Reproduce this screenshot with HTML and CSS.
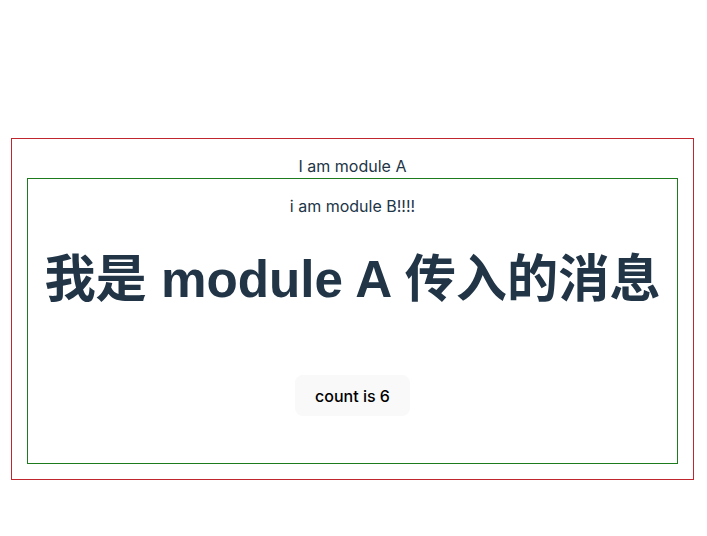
FILE: index.html
```html
<!DOCTYPE html>
<html lang="zh">
<head>
<meta charset="utf-8">
<title>module A</title>
<link rel="stylesheet" href="styles.css">
</head>
<body>
<div class="page">
  <div class="module-a">
    <div class="line">I am module A</div>
    <div class="module-b">
      <div class="line">i am module B!!!!</div>
      <h1 class="title">我是 module A 传入的消息</h1>
      <div class="card">
        <button class="count-btn" type="button">count is 6</button>
      </div>
    </div>
  </div>
</div>
</body>
</html>
```

FILE: styles.css
```css
html, body {
  margin: 0;
  background: #ffffff;
}
body {
  font-family: Inter, "Noto Sans CJK SC", sans-serif;
  font-size: 16px;
  line-height: 1.5;
  font-weight: 400;
  color: #213547;
}
.page {
  padding: 138px 13px 0 11px;
}
.module-a {
  border: 1px solid #c0262d;
  padding: 15px;
  text-align: center;
}
.module-b {
  border: 1px solid #1d7a1d;
  padding: 15px;
}
.line {
  line-height: 24px;
}
.title {
  font-size: 51.2px;
  line-height: 1.1;
  font-weight: 700;
  margin: 0.67em 0;
  white-space: nowrap;
  font-family: "Liberation Sans", "Noto Sans CJK SC", sans-serif;
}
.card {
  padding: 32px;
}
.count-btn {
  border-radius: 8px;
  border: 1px solid transparent;
  padding: 0.6em 1.2em;
  font-size: 16px;
  font-weight: 500;
  font-family: Inter, "Noto Sans CJK SC", sans-serif;
  line-height: normal;
  background-color: #f9f9f9;
  color: #000000;
  cursor: pointer;
}
```
